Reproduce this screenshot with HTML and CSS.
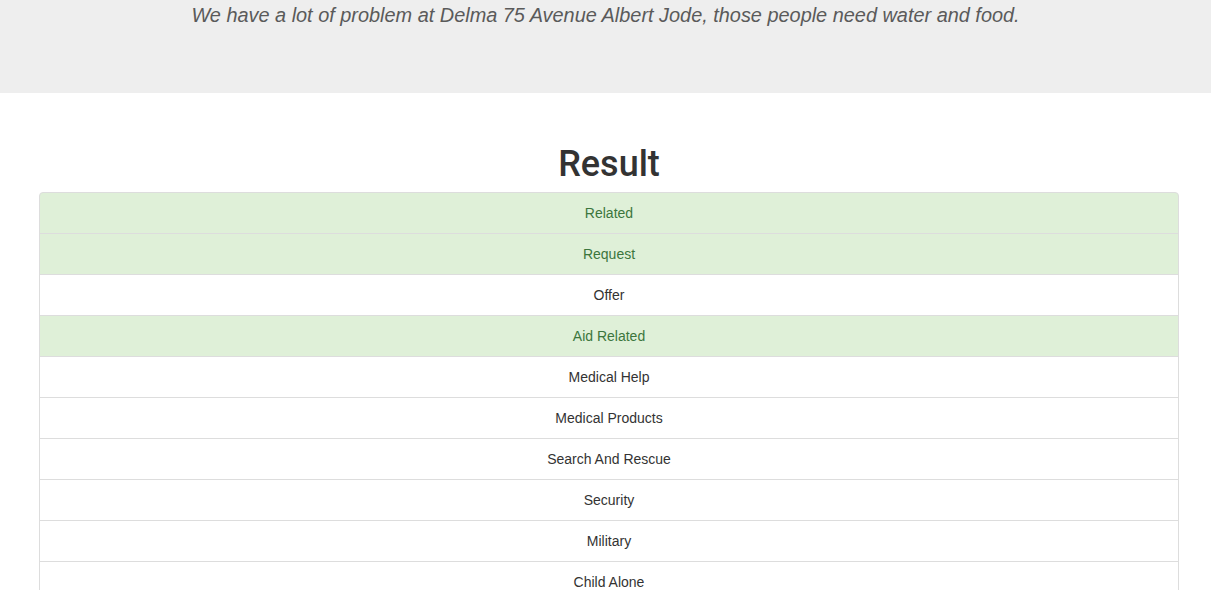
FILE: index.html
```html
<!DOCTYPE html>
<html>
<head>
<meta charset="utf-8">
<title>Result</title>
<link rel="stylesheet" href="styles.css">
</head>
<body>
<div class="jumbotron">
  <p class="message">We have a lot of problem at Delma 75 Avenue Albert Jode, those people need water and food.</p>
</div>
<div class="container">
  <h1 class="title">Result</h1>
  <ul class="list-group">
    <li class="item success">Related</li>
    <li class="item success">Request</li>
    <li class="item">Offer</li>
    <li class="item success">Aid Related</li>
    <li class="item">Medical Help</li>
    <li class="item">Medical Products</li>
    <li class="item">Search And Rescue</li>
    <li class="item">Security</li>
    <li class="item">Military</li>
    <li class="item">Child Alone</li>
  </ul>
</div>
</body>
</html>
```
FILE: styles.css
```css
html, body {
  margin: 0;
  padding: 0;
}
body {
  font-family: "Liberation Sans", Arial, sans-serif;
  font-size: 14px;
  line-height: 20px;
  color: #333;
  background: #fff;
}
.jumbotron {
  background: #eeeeee;
  height: 93px;
  box-sizing: border-box;
}
.message {
  margin: 0;
  text-align: center;
  font-style: italic;
  font-weight: 300;
  font-size: 19.9px;
  line-height: 31px;
  color: #5a5a5a;
}
.container {
  padding: 49px 32px 0 39px;
}
.title {
  margin: 3px 0 7px;
  font-family: Roboto, "Liberation Sans", Arial, sans-serif;
  font-size: 36px;
  font-weight: 500;
  line-height: 39.6px;
  text-align: center;
  color: #333;
}
.list-group {
  list-style: none;
  margin: 0;
  padding: 0;
  width: 1140px;
}
.item {
  display: block;
  padding: 10px 15px;
  margin-bottom: -1px;
  border: 1px solid #dddddd;
  background: #fff;
  text-align: center;
  color: #333;
}
.item:first-child {
  border-top-left-radius: 4px;
  border-top-right-radius: 4px;
}
.item.success {
  background: #dff0d8;
  color: #3c763d;
}
```
